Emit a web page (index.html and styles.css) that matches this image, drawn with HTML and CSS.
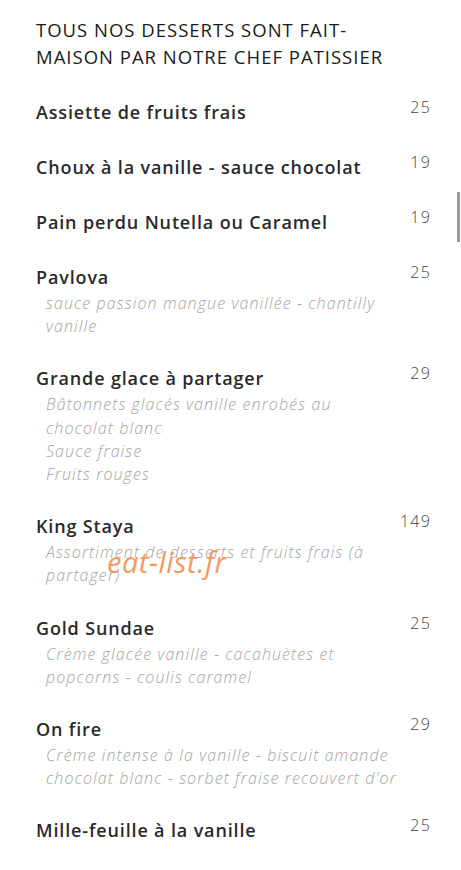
FILE: index.html
```html
<!DOCTYPE html>
<html lang="fr">
<head>
  <meta charset="UTF-8">
  <meta name="viewport" content="width=device-width, initial-scale=1.0">
  <title>Desserts</title>
  <link rel="stylesheet" href="styles.css">
</head>
<body>
  <div class="menu">
    <h2 class="menu-title">TOUS NOS DESSERTS SONT FAIT-MAISON PAR NOTRE CHEF PATISSIER</h2>

    <div class="item">
      <div class="item-head"><span class="name">Assiette de fruits frais</span><span class="price">25</span></div>
    </div>

    <div class="item">
      <div class="item-head"><span class="name">Choux à la vanille - sauce chocolat</span><span class="price">19</span></div>
    </div>

    <div class="item">
      <div class="item-head"><span class="name">Pain perdu Nutella ou Caramel</span><span class="price">19</span></div>
    </div>

    <div class="item">
      <div class="item-head"><span class="name">Pavlova</span><span class="price">25</span></div>
      <p class="desc">sauce passion mangue vanillée - chantilly vanille</p>
    </div>

    <div class="item">
      <div class="item-head"><span class="name">Grande glace à partager</span><span class="price">29</span></div>
      <p class="desc">Bâtonnets glacés vanille enrobés au chocolat blanc<br>Sauce fraise<br>Fruits rouges</p>
    </div>

    <div class="item">
      <div class="item-head"><span class="name">King Staya</span><span class="price">149</span></div>
      <p class="desc">Assortiment de desserts et fruits frais (à partager)</p>
      <span class="watermark">eat-list.fr</span>
    </div>

    <div class="item">
      <div class="item-head"><span class="name">Gold Sundae</span><span class="price">25</span></div>
      <p class="desc">Crème glacée vanille - cacahuètes et popcorns - coulis caramel</p>
    </div>

    <div class="item">
      <div class="item-head"><span class="name">On fire</span><span class="price">29</span></div>
      <p class="desc">Crème intense à la vanille - biscuit amande chocolat blanc - sorbet fraise recouvert d'or</p>
    </div>

    <div class="item">
      <div class="item-head"><span class="name">Mille-feuille à la vanille</span><span class="price">25</span></div>
    </div>
  </div>
  <div class="scrollbar"></div>
</body>
</html>
```

FILE: styles.css
```css
body {
  margin: 0;
  font-family: 'Open Sans', 'Noto Sans', sans-serif;
  background: #ffffff;
  color: #222;
}

.menu {
  padding: 16px 30px 0 36px;
}

.menu-title {
  margin: 0 0 27px;
  width: 370px;
  font-size: 18.5px;
  font-weight: 400;
  line-height: 27px;
  letter-spacing: 1px;
  color: #1a1a1a;
}

.item {
  position: relative;
  padding-bottom: 25px;
}

.item-head {
  display: flex;
  justify-content: space-between;
  align-items: flex-start;
}

.name {
  font-size: 18px;
  font-weight: 600;
  line-height: 30px;
  letter-spacing: 0.85px;
  color: #2a2a2a;
}

.price {
  font-size: 16px;
  font-weight: 300;
  line-height: 20px;
  letter-spacing: 1.2px;
  color: #444;
}

.desc {
  margin: 0;
  padding: 0 32px 0 10px;
  font-size: 16px;
  font-style: italic;
  font-weight: 300;
  line-height: 23.2px;
  letter-spacing: 1.1px;
  color: #a3a3a3;
}

.watermark {
  position: absolute;
  left: 71px;
  top: 31px;
  font-size: 29px;
  font-style: italic;
  letter-spacing: 0.5px;
  color: #f29a62;
}

.scrollbar {
  position: fixed;
  right: 1px;
  top: 192px;
  width: 3px;
  height: 50px;
  background: #999;
}
```
